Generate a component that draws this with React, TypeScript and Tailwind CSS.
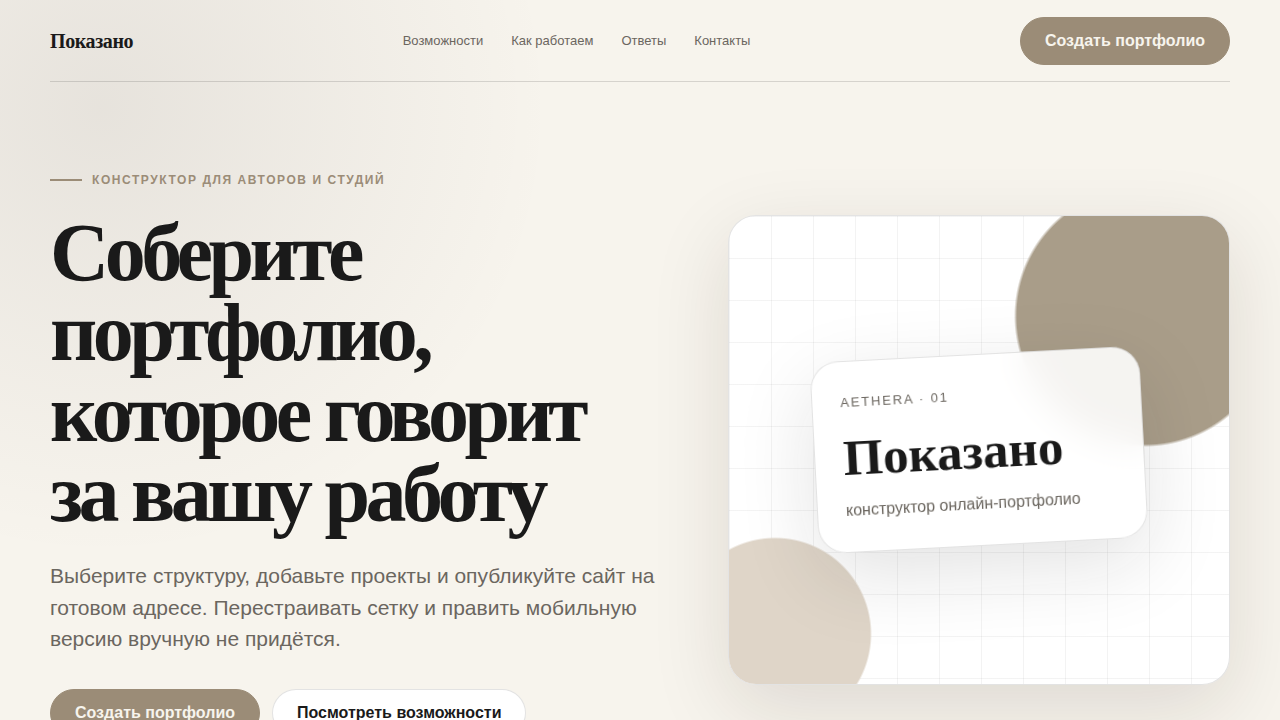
import type { ReactNode } from "react"
import clsx from "clsx"

type ButtonProps = {
  children: ReactNode
  variant?: "primary" | "secondary"
}

const links = [
  { label: "Возможности", href: "#features" },
  { label: "Как работаем", href: "#process" },
  { label: "Ответы", href: "#faq" },
  { label: "Контакты", href: "#contacts" },
]

const Button = ({ children, variant = "primary" }: ButtonProps) => {
  return (
    <button
      type="button"
      className={clsx(
        "h-12 cursor-pointer whitespace-nowrap rounded-full border px-6 text-base font-bold",
        variant === "primary"
          ? "border-[#9b8c77] bg-[#9b8c77] text-[#f7f4ed]"
          : "border-[#1a1a1a]/12 bg-white text-[#1a1a1a]"
      )}
    >
      {children}
    </button>
  )
}

const Header = () => {
  return (
    <header className="flex items-center justify-between border-b border-[#1a1a1a]/15 pt-[17px] pb-4">
      <a
        href="#"
        className="font-['Liberation_Serif',serif] text-xl font-bold tracking-[-0.02em]"
      >
        Показано
      </a>
      <nav className="flex gap-7 text-[13px] text-[#6b665f]">
        {links.map((link) => (
          <a key={link.href} href={link.href}>
            {link.label}
          </a>
        ))}
      </nav>
      <Button>Создать портфолио</Button>
    </header>
  )
}

const Artwork = () => {
  return (
    <div className="relative grid h-[470px] place-items-center overflow-hidden rounded-[28px] border border-[#1a1a1a]/12 bg-white">
      {/* grid lines */}
      <div className="absolute inset-0 bg-[linear-gradient(rgba(26,26,26,0.05)_1px,transparent_1px),linear-gradient(90deg,rgba(26,26,26,0.05)_1px,transparent_1px)] bg-size-[42px_42px]" />
      {/* colour spots */}
      <div className="absolute inset-0 bg-[radial-gradient(circle_at_416px_100px,#a99d89_128px,transparent_131px),radial-gradient(circle_at_46px_418px,#dfd5c8_95px,transparent_97px)]" />
      <div className="relative w-[66%] -rotate-3 rounded-[28px] border border-[#1a1a1a]/12 bg-white/88 p-7 shadow-[0_24px_80px_rgba(26,26,26,0.12)] backdrop-blur-[18px]">
        <p className="text-[13px] leading-[26px] tracking-[0.14em] text-[#6b665f]">
          AETHERA · 01
        </p>
        <p className="mt-4 mb-3.5 font-['Liberation_Serif',serif] text-[51px] font-bold leading-[52px]">
          Показано
        </p>
        <p className="text-base leading-[26px] text-[#6b665f]">
          конструктор онлайн-портфолио
        </p>
      </div>
    </div>
  )
}

const Hero = () => {
  return (
    <section className="grid grid-cols-[minmax(0,1.1fr)_minmax(0,0.9fr)] items-center gap-16 py-[81px]">
      <div className="pt-2">
        <p className="flex items-center gap-2.5 text-xs leading-[18px] font-bold uppercase tracking-[0.13em] text-[#9b8c77]">
          <span className="h-0.5 w-8 bg-[#9b8c77]" />
          Конструктор для авторов и студий
        </p>
        <h1 className="mt-6 font-['Liberation_Serif',serif] text-[82px] font-bold leading-[0.98] tracking-[-0.055em]">
          Соберите портфолио, которое говорит за вашу работу
        </h1>
        <p className="mt-[26px] text-[21px] leading-normal text-[#6b665f]">
          Выберите структуру, добавьте проекты и опубликуйте сайт на готовом
          адресе. Перестраивать сетку и править мобильную версию вручную не
          придётся.
        </p>
        <div className="mt-[34px] flex gap-3">
          <Button>Создать портфолио</Button>
          <Button variant="secondary">Посмотреть возможности</Button>
        </div>
      </div>
      <div className="rounded-[28px] shadow-[0_24px_80px_rgba(40,26,20,0.12)]">
        <Artwork />
      </div>
    </section>
  )
}

const App = () => {
  return (
    <div className="min-h-screen overflow-hidden bg-[#f7f4ed] bg-[radial-gradient(circle_at_102px_108px,rgba(40,26,26,0.08),transparent_450px)] px-[50px] font-['Liberation_Sans',sans-serif] text-[#1a1a1a]">
      <Header />
      <main>
        <Hero />
      </main>
    </div>
  )
}

export default App
